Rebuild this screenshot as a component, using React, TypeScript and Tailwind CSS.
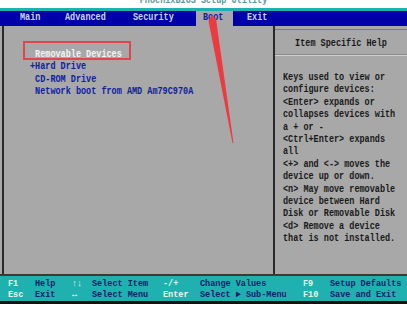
import React from 'react';

const mono = "font-['Liberation_Mono','DejaVu_Sans_Mono',monospace] font-bold";

// one text row: narrow mono glyphs stretched up to look like the BIOS bitmap font
const Row = ({
  text,
  className = '',
  h = 'h-[12.4px] leading-[12.4px]',
  s = 'scale-y-[1.3]',
}: {
  text: string;
  className?: string;
  h?: string;
  s?: string;
}) => (
  <div className={`${h} whitespace-pre text-[8.5px] ${className}`}>
    <span className={`inline-block ${s}`}>{text}</span>
  </div>
);

const HELP = [
  'Keys used to view or',
  'configure devices:',
  '<Enter> expands or',
  'collapses devices with',
  'a + or -',
  '<Ctrl+Enter> expands',
  'all',
  '<+> and <-> moves the',
  'device up or down.',
  '<n> May move removable',
  'device between Hard',
  'Disk or Removable Disk',
  '<d> Remove a device',
  'that is not installed.',
];

const FOOTER = [
  ['F1', 'Help', '↑↓', 'Select Item', '-/+', 'Change Values', 'F9', 'Setup Defaults'],
  ['Esc', 'Exit', '↔', 'Select Menu', 'Enter', 'Select ► Sub-Menu', 'F10', 'Save and Exit'],
];
const COLS = ['w-[27px]', 'w-[37px]', 'w-[20px]', 'w-[71px]', 'w-[37px]', 'w-[103px]', 'w-[27px]', 'flex-1'];

export default function App() {
  return (
    <div className={`relative w-[407px] h-[311px] overflow-hidden bg-white ${mono}`}>
      {/* title row, cut off at the top of the shot */}
      <div className="h-[8px] overflow-hidden bg-white">
        <div className="-mt-[6px] text-center text-[#5a9a9a]">
          <Row text="PhoenixBIOS Setup Utility" />
        </div>
      </div>
      <div className="h-[3px] bg-[#1fb0b0]" />

      {/* menu bar */}
      <div className="flex h-[15px] items-center bg-[#0000a8] text-[#c8d4ee]">
        <div className="w-[20px]" />
        <Row text="Main" h="h-[15px] leading-[15px]" className="w-[45px]" />
        <Row text="Advanced" h="h-[15px] leading-[15px]" className="w-[68px]" />
        <Row text="Security" h="h-[15px] leading-[15px]" className="w-[63px]" />
        <div className="w-[37px] h-[15px] bg-[#a8a8a8] pl-[7px] text-[#1020a0]">
          <Row text="Boot" h="h-[15px] leading-[15px]" />
        </div>
        <div className="w-[14px]" />
        <Row text="Exit" h="h-[15px] leading-[15px]" />
      </div>

      {/* body */}
      <div className="flex h-[250px] bg-[#a8a8a8] border-b-2 border-[#3a3a3a]">
        <div className="ml-[2px] w-[271px] border-l-2 border-[#2a2a2a] pl-[26px] pt-[22px] text-[#1020a0]">
          <Row text=" Removable Devices" className="text-[#f4f4f4]" />
          <Row text="+Hard Drive" />
          <Row text=" CD-ROM Drive" />
          <Row text=" Network boot from AMD Am79C970A" />
        </div>
        <div className="flex-1 border-l-2 border-[#2a2a2a] text-[#1a1a1a]">
          <div className="mt-[3px] flex h-[26px] items-center justify-center border-y border-t-[#7a7a7a] border-b-[#8a8a8a] pt-[2px] shadow-[0_1px_0_#d0d0d0]">
            <Row text="Item Specific Help" />
          </div>
          <div className="pl-[8px] pt-[16px]">
            {HELP.map((l) => (
              <Row key={l} text={l} />
            ))}
          </div>
        </div>
      </div>

      {/* key legend */}
      <div className="h-[25px] bg-[#1fb0b0] pl-[8px] pt-[3px]">
        {FOOTER.map((row, r) => (
          <div key={r} className="flex">
            {row.map((t, i) => (
              <Row
                key={i}
                text={t}
                h="h-[11px] leading-[11px]"
                s="scale-y-[1.1]"
                className={`${COLS[i]} ${i % 2 === 0 ? 'text-[#f2f4e6]' : 'text-[#12206a]'}`}
              />
            ))}
          </div>
        ))}
      </div>
      <div className="h-[3px] bg-[#111]" />

      {/* annotations */}
      <div className="absolute left-[23px] top-[41px] h-[19px] w-[108px] border-2 border-[#e0474c]" />
      <svg className="absolute left-0 top-0" width="407" height="311" viewBox="0 0 407 311">
        <polygon points="208.5,21 211.5,15 216,19 233.5,143 232.5,143" fill="#ec3a40" />
      </svg>
    </div>
  );
}
